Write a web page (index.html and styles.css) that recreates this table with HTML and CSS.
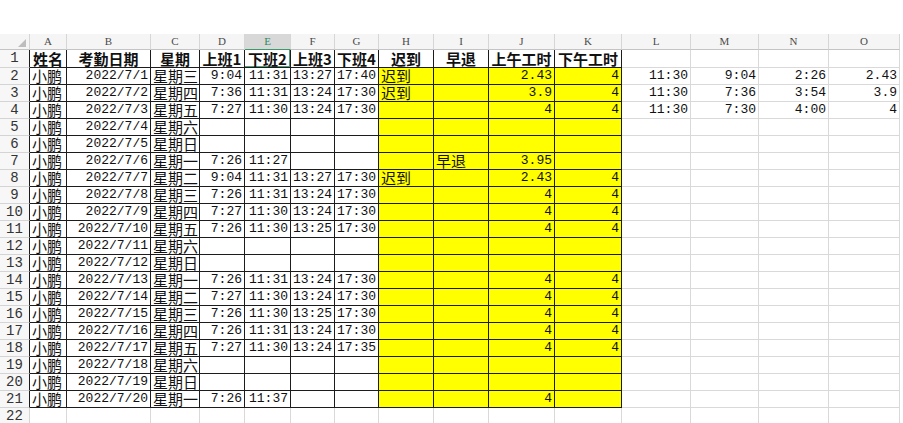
FILE: index.html
```html
<!DOCTYPE html>
<html lang="zh-CN">
<head>
<meta charset="utf-8">
<title>考勤表</title>
<link rel="stylesheet" href="styles.css">
</head>
<body>
<div class="sheet">
<table class="grid">
<colgroup>
<col class="w-rn"><col class="w-a"><col class="w-b"><col class="w-c"><col class="w-d"><col class="w-e"><col class="w-f"><col class="w-g"><col class="w-h"><col class="w-i"><col class="w-j"><col class="w-k"><col class="w-l"><col class="w-m"><col class="w-n"><col class="w-o">
</colgroup>
<tr class="ch"><td class="corner"><span class="tri"></span></td><td>A</td><td>B</td><td>C</td><td>D</td><td class="sel">E</td><td>F</td><td>G</td><td>H</td><td>I</td><td>J</td><td>K</td><td>L</td><td>M</td><td>N</td><td>O</td></tr>
<tr class="h"><td>1</td><td>姓名</td><td>考勤日期</td><td>星期</td><td>上班1</td><td class="cur">下班2</td><td>上班3</td><td>下班4</td><td>迟到</td><td>早退</td><td>上午工时</td><td>下午工时</td><td></td><td></td><td></td><td></td></tr>
<tr class="d"><td>2</td><td>小鹏</td><td>2022/7/1</td><td>星期三</td><td>9:04</td><td>11:31</td><td>13:27</td><td>17:40</td><td>迟到</td><td></td><td>2.43</td><td>4</td><td>11:30</td><td>9:04</td><td>2:26</td><td>2.43</td></tr>
<tr class="d"><td>3</td><td>小鹏</td><td>2022/7/2</td><td>星期四</td><td>7:36</td><td>11:31</td><td>13:24</td><td>17:30</td><td>迟到</td><td></td><td>3.9</td><td>4</td><td>11:30</td><td>7:36</td><td>3:54</td><td>3.9</td></tr>
<tr class="d"><td>4</td><td>小鹏</td><td>2022/7/3</td><td>星期五</td><td>7:27</td><td>11:30</td><td>13:24</td><td>17:30</td><td></td><td></td><td>4</td><td>4</td><td>11:30</td><td>7:30</td><td>4:00</td><td>4</td></tr>
<tr class="d"><td>5</td><td>小鹏</td><td>2022/7/4</td><td>星期六</td><td></td><td></td><td></td><td></td><td></td><td></td><td></td><td></td><td></td><td></td><td></td><td></td></tr>
<tr class="d"><td>6</td><td>小鹏</td><td>2022/7/5</td><td>星期日</td><td></td><td></td><td></td><td></td><td></td><td></td><td></td><td></td><td></td><td></td><td></td><td></td></tr>
<tr class="d"><td>7</td><td>小鹏</td><td>2022/7/6</td><td>星期一</td><td>7:26</td><td>11:27</td><td></td><td></td><td></td><td>早退</td><td>3.95</td><td></td><td></td><td></td><td></td><td></td></tr>
<tr class="d"><td>8</td><td>小鹏</td><td>2022/7/7</td><td>星期二</td><td>9:04</td><td>11:31</td><td>13:27</td><td>17:30</td><td>迟到</td><td></td><td>2.43</td><td>4</td><td></td><td></td><td></td><td></td></tr>
<tr class="d"><td>9</td><td>小鹏</td><td>2022/7/8</td><td>星期三</td><td>7:26</td><td>11:31</td><td>13:24</td><td>17:30</td><td></td><td></td><td>4</td><td>4</td><td></td><td></td><td></td><td></td></tr>
<tr class="d"><td>10</td><td>小鹏</td><td>2022/7/9</td><td>星期四</td><td>7:27</td><td>11:30</td><td>13:24</td><td>17:30</td><td></td><td></td><td>4</td><td>4</td><td></td><td></td><td></td><td></td></tr>
<tr class="d"><td>11</td><td>小鹏</td><td>2022/7/10</td><td>星期五</td><td>7:26</td><td>11:30</td><td>13:25</td><td>17:30</td><td></td><td></td><td>4</td><td>4</td><td></td><td></td><td></td><td></td></tr>
<tr class="d"><td>12</td><td>小鹏</td><td>2022/7/11</td><td>星期六</td><td></td><td></td><td></td><td></td><td></td><td></td><td></td><td></td><td></td><td></td><td></td><td></td></tr>
<tr class="d"><td>13</td><td>小鹏</td><td>2022/7/12</td><td>星期日</td><td></td><td></td><td></td><td></td><td></td><td></td><td></td><td></td><td></td><td></td><td></td><td></td></tr>
<tr class="d"><td>14</td><td>小鹏</td><td>2022/7/13</td><td>星期一</td><td>7:26</td><td>11:31</td><td>13:24</td><td>17:30</td><td></td><td></td><td>4</td><td>4</td><td></td><td></td><td></td><td></td></tr>
<tr class="d"><td>15</td><td>小鹏</td><td>2022/7/14</td><td>星期二</td><td>7:27</td><td>11:30</td><td>13:24</td><td>17:30</td><td></td><td></td><td>4</td><td>4</td><td></td><td></td><td></td><td></td></tr>
<tr class="d"><td>16</td><td>小鹏</td><td>2022/7/15</td><td>星期三</td><td>7:26</td><td>11:30</td><td>13:25</td><td>17:30</td><td></td><td></td><td>4</td><td>4</td><td></td><td></td><td></td><td></td></tr>
<tr class="d"><td>17</td><td>小鹏</td><td>2022/7/16</td><td>星期四</td><td>7:26</td><td>11:31</td><td>13:24</td><td>17:30</td><td></td><td></td><td>4</td><td>4</td><td></td><td></td><td></td><td></td></tr>
<tr class="d"><td>18</td><td>小鹏</td><td>2022/7/17</td><td>星期五</td><td>7:27</td><td>11:30</td><td>13:24</td><td>17:35</td><td></td><td></td><td>4</td><td>4</td><td></td><td></td><td></td><td></td></tr>
<tr class="d"><td>19</td><td>小鹏</td><td>2022/7/18</td><td>星期六</td><td></td><td></td><td></td><td></td><td></td><td></td><td></td><td></td><td></td><td></td><td></td><td></td></tr>
<tr class="d"><td>20</td><td>小鹏</td><td>2022/7/19</td><td>星期日</td><td></td><td></td><td></td><td></td><td></td><td></td><td></td><td></td><td></td><td></td><td></td><td></td></tr>
<tr class="d"><td>21</td><td>小鹏</td><td>2022/7/20</td><td>星期一</td><td>7:26</td><td>11:37</td><td></td><td></td><td></td><td></td><td>4</td><td></td><td></td><td></td><td></td><td></td></tr>
<tr class="e"><td>22</td><td></td><td></td><td></td><td></td><td></td><td></td><td></td><td></td><td></td><td></td><td></td><td></td><td></td><td></td><td></td></tr>
</table>
</div>
</body>
</html>
```

FILE: styles.css
```css
html, body {
  margin: 0;
  padding: 0;
  background: #ffffff;
}

.sheet {
  padding-top: 34px;
  height: 389px;
  overflow: hidden;
}

.grid {
  table-layout: fixed;
  border-collapse: separate;
  border-spacing: 0;
  width: 900px;
  font-family: "Noto Sans CJK SC", sans-serif;
  font-size: 15px;
  color: #111;
}

.w-rn { width: 30px; }
.w-a { width: 37px; }
.w-b { width: 84px; }
.w-c { width: 49px; }
.w-d { width: 45px; }
.w-e { width: 46px; }
.w-f { width: 44px; }
.w-g { width: 44px; }
.w-h { width: 55px; }
.w-i { width: 55px; }
.w-j { width: 66px; }
.w-k { width: 67px; }
.w-l { width: 69px; }
.w-m { width: 68px; }
.w-n { width: 70px; }
.w-o { width: 71px; }

.grid td {
  padding: 0 2px;
  height: 16px;
  line-height: 16px;
  white-space: nowrap;
  border-right: 1px solid #d9d9d9;
  border-bottom: 1px solid #d9d9d9;
  vertical-align: middle;
}

/* column letter header */
.ch td {
  height: 13px;
  line-height: 13px;
  background: #f5f5f5;
  border-right: 1px solid #d6d6d6;
  border-bottom: 1px solid #c4c4c4;
  font-family: "Liberation Serif", serif;
  font-size: 11px;
  color: #4a4a4a;
  text-align: center;
}
.ch td.sel {
  background: #d8d8d8;
  color: #2f8a5e;
  border-bottom: 1px solid #3a9a6c;
}
.ch td.corner {
  text-align: right;
  vertical-align: bottom;
  padding: 0 3px 2px 0;
  line-height: 0;
}
.tri {
  display: inline-block;
  width: 0;
  height: 0;
  border-left: 8px solid transparent;
  border-bottom: 8px solid #bdbdbd;
}

/* row numbers */
.h td:first-child,
.d td:first-child,
.e td:first-child {
  background: #f7f7f7;
  font-family: "Liberation Mono", monospace;
  font-size: 14px;
  color: #333;
  text-align: center;
  padding: 0;
  border-bottom: 1px solid #d4d4d4;
}
.h td:first-child,
.d td:first-child {
  border-right: 1px solid #1c1c1c;
}
.e td:first-child {
  border-right: 1px solid #d4d4d4;
}

/* header row */
.h td {
  height: 17px;
  line-height: 17px;
}
.h td:nth-child(n+2):nth-child(-n+12) {
  border-right: 1px solid #1c1c1c;
  border-bottom: 1px solid #1c1c1c;
  font-weight: 700;
  text-align: center;
  padding: 0;
}
.h td.cur {
  box-shadow: inset 0 -1px 0 #4f9f78, inset -1px 0 0 #4f9f78;
}

/* data rows */
.d td:nth-child(n+2):nth-child(-n+12) {
  border-right: 1px solid #1c1c1c;
  border-bottom: 1px solid #1c1c1c;
}
.d td:nth-child(n+9):nth-child(-n+12) {
  background: #ffff00;
}
.d td:nth-child(n+2) {
  font-family: "Liberation Mono", monospace;
  font-size: 13px;
  text-align: right;
  padding: 0 2px 0 0;
}
.d td:nth-child(2),
.d td:nth-child(4),
.d td:nth-child(9),
.d td:nth-child(10) {
  font-family: "Noto Sans CJK SC", sans-serif;
  font-size: 15px;
  text-align: left;
  padding: 0 0 0 2px;
}
```
